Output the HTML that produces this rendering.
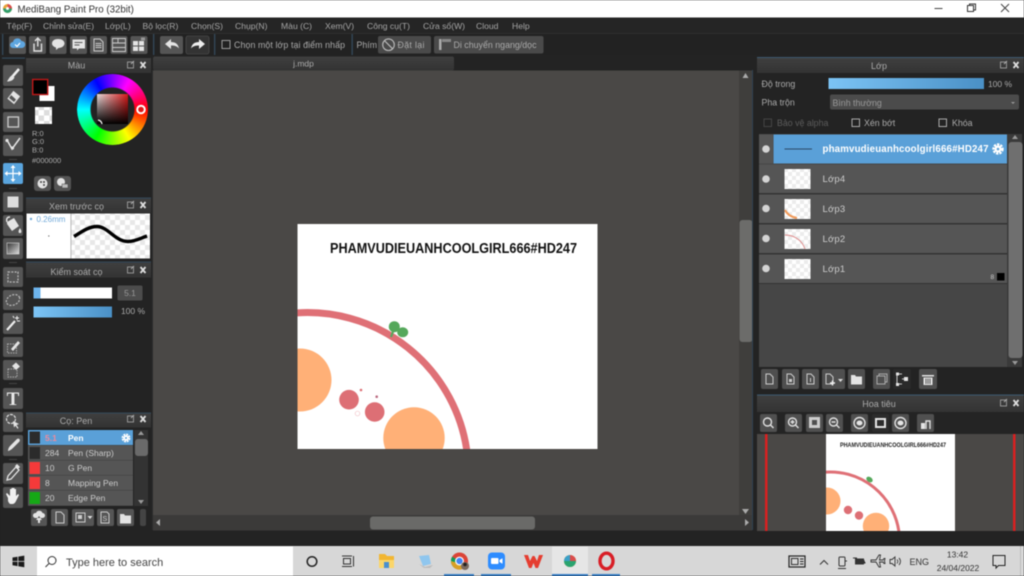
<!DOCTYPE html>
<html><head><meta charset="utf-8"><title>MediBang Paint Pro</title>
<style>
html,body{margin:0;padding:0;background:#222;width:1024px;height:576px;overflow:hidden}
#wrap{position:relative;width:1024px;height:576px;overflow:hidden;filter:blur(.4px)}
svg{position:absolute;left:0;top:0}
text{font-family:"Liberation Sans","Noto Sans CJK SC",sans-serif;font-size:9.5px;fill:#a8a8a8}
.m text{font-size:8.6px;fill:#a5a5a5}
.t{fill:#aaa;font-size:8.8px}
.h{fill:#aaa;font-size:9px;text-anchor:middle}
.b{fill:#555;}
.w{fill:#e4e4e4}
.s{fill:none;stroke:#e0e0e0;stroke-width:1.4}
#wheel{position:absolute;left:77px;top:74px;width:71px;height:71px;border-radius:50%;background:conic-gradient(from 90deg,#f00,#ff0,#0f0,#0ff,#00f,#f0f,#f00);-webkit-mask:radial-gradient(circle,transparent 0 21.5px,#000 22.5px);mask:radial-gradient(circle,transparent 0 21.5px,#000 22.5px)}
#sq{position:absolute;left:97px;top:94px;width:31px;height:30px;background:linear-gradient(to bottom,transparent,#000),linear-gradient(to right,#e6dcdc,#d81818)}
</style></head><body>
<div id="wrap">
<svg width="1024" height="576" viewBox="0 0 1024 576" xmlns="http://www.w3.org/2000/svg">
<defs>
<pattern id="ck" width="8" height="8" patternUnits="userSpaceOnUse"><rect width="8" height="8" fill="#fff"/><rect width="4" height="4" fill="#ececec"/><rect x="4" y="4" width="4" height="4" fill="#ececec"/></pattern>
<pattern id="ck3" width="11" height="11" patternUnits="userSpaceOnUse"><rect width="11" height="11" fill="#fff"/><rect width="5.5" height="5.5" fill="#ddd"/><rect x="5.5" y="5.5" width="5.5" height="5.500" fill="#ddd"/></pattern>
<pattern id="ck2" width="10" height="10" patternUnits="userSpaceOnUse"><rect width="10" height="10" fill="#fff"/><rect width="5" height="5" fill="#e8e8e8"/><rect x="5" y="5" width="5" height="5" fill="#e8e8e8"/></pattern>
<linearGradient id="bl" x1="0" x2="1" y1="0" y2="0"><stop offset="0" stop-color="#7cc4f5"/><stop offset="1" stop-color="#4a90c6"/></linearGradient>
<linearGradient id="gr" x1="0" x2="1" y1="0" y2="1"><stop offset="0" stop-color="#333"/><stop offset="1" stop-color="#ddd"/></linearGradient>
<linearGradient id="hd" x1="0" x2="0" y1="0" y2="1"><stop offset="0" stop-color="#3f3f3f"/><stop offset="1" stop-color="#333"/></linearGradient>
<clipPath id="cv"><rect x="297.5" y="224" width="300" height="225"/></clipPath>
<clipPath id="nv"><rect x="826" y="434" width="129" height="97"/></clipPath>
</defs>

<!-- base -->
<rect width="1024" height="576" fill="#232323"/>
<!-- title bar -->
<rect width="1024" height="17.5" fill="#fff"/>
<circle cx="7.5" cy="8.5" r="4.5" fill="#e8a33a"/><path d="M7.5 4a4.5 4.5 0 0 1 4.5 4.5H7.5z" fill="#d94c4c"/><path d="M3 8.5a4.5 4.5 0 0 0 4.5 4.5 4.5 4.5 0 0 0 4.5-4.5H7.5z" fill="#2f9d6a"/><circle cx="7.5" cy="8.5" r="1.5" fill="#fff"/>
<text x="17.5" y="12.5" style="font-size:9.7px;fill:#333">MediBang Paint Pro (32bit)</text>
<path d="M934.5 8.5h8" stroke="#444" stroke-width="1"/>
<path d="M967.5 5.5h6v6h-6zM969.5 5.5v-1.5h6v6h-2" fill="none" stroke="#333" stroke-width="1"/>
<path d="M1001 4l8 8M1009 4l-8 8" stroke="#444" stroke-width="1"/>

<!-- menu -->
<rect y="17.5" width="1024" height="16" fill="#252525"/>
<rect y="33" width="1024" height="1" fill="#2e2e2e"/>
<g class="m">
<text x="6.5" y="29">Tệp(F)</text><text x="43" y="29">Chỉnh sửa(E)</text><text x="105" y="29">Lớp(L)</text><text x="142.5" y="29">Bộ lọc(R)</text><text x="191" y="29">Chọn(S)</text><text x="235" y="29">Chụp(N)</text><text x="281" y="29">Màu (C)</text><text x="325" y="29">Xem(V)</text><text x="367" y="29">Công cụ(T)</text><text x="423" y="29">Cửa sổ(W)</text><text x="476" y="29">Cloud</text><text x="512" y="29">Help</text>
</g>

<!-- toolbar -->
<rect y="34" width="1024" height="21" fill="#222"/>
<rect x="2" y="34" width="1.3" height="21" fill="#34495a"/><rect x="153" y="34" width="1.3" height="21" fill="#34495a"/><rect x="214" y="34" width="1.3" height="21" fill="#34495a"/><rect x="351.5" y="34" width="1.3" height="21" fill="#34495a"/>
<g class="b">
<rect x="9" y="36" width="17" height="18" rx="2" fill="#555"/><rect x="29" y="36" width="17" height="18" rx="2"/><rect x="49.500" y="36" width="17" height="18" rx="2"/><rect x="70" y="36" width="17" height="18" rx="2"/><rect x="90" y="36" width="17" height="18" rx="2"/><rect x="110.500" y="36" width="17" height="18" rx="2"/><rect x="130.500" y="36" width="17" height="18" rx="2"/>
<rect x="160" y="36" width="23" height="18" rx="2"/><rect x="186" y="36" width="23" height="18" rx="2" fill="#333" stroke="#555" stroke-width=".6"/>
<rect x="378" y="36" width="53" height="17.500" rx="2" fill="#4a4a4a"/><rect x="434" y="36" width="109.500" height="17.500" rx="2" fill="#4a4a4a"/>
</g>
<path d="M13 48a3 3 0 0 1 0-6 4.500 4.500 0 0 1 8.500-1 3.500 3.500 0 0 1 .5 7z" fill="#5ea6e0"/><path d="M15 44.500l2 2 3-3.500" stroke="#fff" stroke-width="1.200" fill="none"/>
<path d="M34 43.500v7.500h7.500v-7.500M37.800 46.500v-8M35 41l2.800-3 2.800 3" class="s"/>
<path d="M58 39c4.500 0 6.500 2 6.500 4.500s-3 4.500-6 4.500l-2.500 2v-2.500c-2.500-.7-4-2.200-4-4 0-2.500 2-4.500 6-4.500z" class="w"/>
<path d="M72.500 39.500h12.500v9h-6l-2 2v-2h-4.500z" class="w"/><path d="M74.500 42.500h8M74.500 45h5" stroke="#555" stroke-width="1"/>
<path d="M94 39h6l3 3v9h-9z" fill="none" stroke="#ccc" stroke-width="1"/><path d="M95.500 43.500h6M95.500 45.500h6M95.500 47.500h6" stroke="#ccc"/>
<path d="M112.500 38.500h13v13h-13zM112.500 43h13M112.500 47.500h13M118 38.500v4.500" fill="none" stroke="#ccc" stroke-width=".9"/>
<rect x="133" y="41" width="5" height="4.500" class="w"/><rect x="139" y="41" width="5" height="4.500" class="w"/><rect x="133" y="46.500" width="5" height="4.500" class="w"/><rect x="139" y="46.500" width="5" height="4.500" class="w"/><rect x="141" y="37.500" width="4" height="3" fill="#999"/>
<path d="M165 44l6-5v3c4 0 7 1.500 8 6.500-2-2.500-4.500-3-8-3v3.500z" class="w"/>
<path d="M205 44l-6-5v3c-4 0-7 1.500-8 6.500 2-2.500 4.500-3 8-3v3.500z" fill="#eee"/>
<rect x="222" y="40.500" width="8" height="8" fill="none" stroke="#aaa" stroke-width=".9"/>
<text x="234" y="48" class="t" textLength="111">Chọn một lớp tại điểm nhấp</text>
<text x="356.500" y="48" class="t">Phím</text>
<circle cx="388.500" cy="44.700" r="5.800" fill="none" stroke="#bbb" stroke-width="1.100"/><path d="M384.500 40.700l8 8" stroke="#bbb" stroke-width="1.100"/>
<text x="397.500" y="48" class="t" textLength="27">Đặt lại</text>
<rect x="439" y="39" width="2.500" height="11" fill="#aaa"/><rect x="442" y="39" width="9" height="3" fill="#888"/>
<text x="453.500" y="48" class="t" textLength="83">Di chuyển ngang/dọc</text>

<!-- canvas area -->
<rect x="153" y="55" width="599" height="16" fill="#232323"/>
<rect x="153" y="56.500" width="301" height="14" rx="2" fill="url(#hd)"/>
<text x="303.500" y="66.500" class="h" style="font-size:8.500px">j.mdp</text>
<rect x="153" y="70.500" width="586" height="445" fill="#4a4846"/>
<rect x="739" y="70.500" width="13" height="445" fill="#3f3e3c"/>
<rect x="739.500" y="220" width="13" height="122" rx="3" fill="#6c6c6a"/>
<path d="M742.500 78l3-5 3 5z" fill="#aaa"/><path d="M742 509h7l-3.500 5z" fill="#aaa"/>
<rect x="153" y="515" width="599" height="15.500" fill="#3b3a39"/>
<rect x="370" y="516.500" width="165" height="13" rx="3" fill="#6a6a68"/>
<path d="M160 519l-4 3.500 4 3.500z" fill="#aaa"/><path d="M745 519l4 3.500-4 3.500z" fill="#aaa"/>
<rect x="752" y="70" width="1" height="460" fill="#2f4252"/><rect x="152" y="70" width="1" height="460" fill="#2c2c2c"/>

<!-- drawing -->
<rect x="297.500" y="224" width="300" height="225" fill="#fff"/>
<g clip-path="url(#cv)">
<circle cx="300" cy="380" r="31.500" fill="#ffb077"/>
<circle cx="414" cy="438" r="30.700" fill="#ffb077"/>
<circle cx="349" cy="399.700" r="9.800" fill="#dd6f75"/>
<circle cx="374.700" cy="412" r="9.800" fill="#dd6f75"/>
<circle cx="361" cy="390" r="1.300" fill="#dd6f75"/><circle cx="376.700" cy="396.700" r="1.300" fill="#bb6a80"/>
<circle cx="357.500" cy="413.500" r="2.300" fill="none" stroke="#f3c4c8" stroke-width=".7"/>
<path d="M290 313.500A161 161 0 0 1 467.400 455" fill="none" stroke="#df7076" stroke-width="7"/>
<path d="M391 337l3-8" stroke="#55a85b" stroke-width="2.200"/>
<circle cx="394.300" cy="326.700" r="5.500" fill="#55a85b"/><ellipse cx="402.700" cy="332.300" rx="5.500" ry="5" fill="#55a85b"/>
</g>
<text x="330" y="253" textLength="247" lengthAdjust="spacingAndGlyphs" style="font-size:14.5px;font-weight:bold;fill:#111">PHAMVUDIEUANHCOOLGIRL666#HD247</text>

<!-- left tools -->
<rect x="0" y="56" width="26" height="475" fill="#232323"/>
<rect x="2" y="57.500" width="23" height="1.200" fill="#34495a"/>
<g fill="#555">
<rect x="3" y="65" width="20" height="21" rx="2"/><rect x="3" y="88" width="20" height="21" rx="2"/><rect x="3" y="112" width="20" height="20" rx="2"/><rect x="3" y="135" width="20" height="21" rx="2"/>
<rect x="3" y="192" width="20" height="20" rx="2"/><rect x="3" y="215" width="20" height="21" rx="2"/><rect x="3" y="238" width="20" height="21" rx="2"/>
<rect x="3" y="267" width="20" height="20" rx="2"/><rect x="3" y="290" width="20" height="20" rx="2"/><rect x="3" y="313" width="20" height="21" rx="2"/><rect x="3" y="337" width="20" height="20" rx="2"/><rect x="3" y="360" width="20" height="20" rx="2"/>
<rect x="3" y="388" width="20" height="21" rx="2"/><rect x="3" y="412" width="20" height="20" rx="2"/><rect x="3" y="435" width="20" height="21" rx="2"/><rect x="3" y="463" width="20" height="21" rx="2"/><rect x="3" y="487" width="20" height="21" rx="2"/>
</g>
<rect x="3" y="163" width="20" height="21" rx="2" fill="#5aa5de"/>
<g fill="#444"><rect x="9" y="159" width="8" height="1"/><rect x="9" y="188" width="8" height="1"/><rect x="9" y="262" width="8" height="1"/><rect x="9" y="383" width="8" height="1"/><rect x="9" y="459" width="8" height="1"/></g>
<path d="M19 69l-7 8" stroke="#eee" stroke-width="2.500"/><path d="M12.500 75.500c-2 0-3 2-5.500 6 3.500 0 6-1 7.500-4z" class="w"/>
<path d="M13.500 91.500l6 5-5.500 7-6-5z" class="w"/><path d="M10.500 94.500l5.500 5-2 2.500-5.500-4.500z" fill="#555"/><path d="M13.500 91.500l6 5-5.500 7-6-5z" fill="none" stroke="#ddd"/>
<rect x="8" y="117" width="10.500" height="10" fill="none" stroke="#ccc" stroke-width="1.300"/>
<path d="M7 140l5 9 8-11" fill="none" stroke="#e6e6e6" stroke-width="1.500"/><circle cx="7" cy="140.500" r="1.600" class="w"/><circle cx="12.500" cy="148" r="1.600" class="w"/>
<path d="M13 165.500v16M5 173.500h16" stroke="#fff" stroke-width="1.200"/><path d="M13 165l-2.500 3h5zM13 182l-2.500-3h5zM4.500 173.500l3-2.500v5zM21.500 173.500l-3-2.500v5z" fill="#fff"/>
<rect x="7.500" y="196.500" width="11" height="11" fill="#ddd"/>
<path d="M7 222l7-4 5 8-7 5-5-7z" class="w"/><path d="M7 222c-1-3 0-5 3-5" class="s"/><path d="M20 228c1 2 2 3 1 5h-2c-1-2 0-3 1-5z" class="w"/>
<rect x="7" y="243" width="12" height="11" fill="url(#gr)" stroke="#ddd" stroke-width=".6"/>
<rect x="8" y="272" width="10" height="10" fill="none" stroke="#bbb" stroke-width="1.200" stroke-dasharray="2 1.300"/>
<ellipse cx="13" cy="300" rx="7" ry="5" transform="rotate(-25 13 300)" fill="none" stroke="#bbb" stroke-width="1.200" stroke-dasharray="2 1.300"/>
<path d="M7 330l8-9" stroke="#eee" stroke-width="2.200"/><path d="M17 316v4M15 318h4M20 321h-3M13 316l1 2" stroke="#eee"/>
<rect x="7.500" y="344" width="9" height="9" fill="none" stroke="#aaa" stroke-dasharray="1.500 1"/><path d="M11 349l7-8 2 2-7 8z" class="w"/>
<rect x="8" y="369" width="9" height="8" fill="none" stroke="#aaa" stroke-dasharray="1.500 1"/><path d="M12 366l4-3.500 4 4-4 3.500z" class="w"/>
<text x="13" y="405" style="font-family:'Liberation Serif',serif;font-size:19px;font-weight:bold;fill:#e8e8e8;text-anchor:middle">T</text>
<circle cx="11" cy="419" r="4.500" fill="none" stroke="#ddd" stroke-width="1.200" stroke-dasharray="3 1"/><path d="M13 421l6 3-2.500 1 2 3-1 .7-2-3-1.500 1.800z" class="w"/>
<path d="M8 451c0-3 2-5 3-6l6-6c2-1 3.500.5 2.500 2.500l-6 6c-1 1-3 3-5.500 3.500z" class="w"/>
<path d="M7 480l1-4 8-9 3 3-8 9z" fill="none" stroke="#e4e4e4" stroke-width="1.300"/><path d="M15 466l2-2 3 3-2 2z" class="w"/>
<path d="M8 498l-2-4 1-1 3 3v-7h1.500v5-6h1.500v6-6h1.500v6-5h1.500v7l2-2 1 1-3 6c-1 2-2 3-4 3h-1c-1.500 0-2-1-3-3z" fill="#f0f0f0"/>

<!-- Colour panel -->
<rect x="26" y="58" width="125" height="137" fill="#232323"/>
<rect x="26" y="58" width="125" height="15" fill="url(#hd)"/>
<text x="76.500" y="68.500" class="h">Màu</text>
<g><rect x="127.500" y="62" width="6" height="6" fill="none" stroke="#aaa" stroke-width=".8"/><path d="M131 64l3-3" stroke="#aaa"/><path d="M140.500 62l5 6M145.500 62l-5 6" stroke="#ddd" stroke-width="1.800"/></g>
<rect x="39.500" y="86" width="15" height="15" fill="#fff"/>
<rect x="32.700" y="79.500" width="15" height="15" fill="#000" stroke="#c01818" stroke-width="1.400"/>
<rect x="35" y="107" width="17" height="17" fill="url(#ck3)"/>
<text x="32" y="136" style="font-size:7.500px;fill:#aaa">R:0</text><text x="32" y="144" style="font-size:7.500px;fill:#aaa">G:0</text><text x="32" y="152.500" style="font-size:7.500px;fill:#aaa">B:0</text><text x="32" y="163" style="font-size:7.500px;fill:#aaa">#000000</text>
<rect x="34" y="176" width="17" height="15" rx="3" fill="#555"/><rect x="54" y="176" width="17" height="15" rx="3" fill="#555"/>
<circle cx="42.500" cy="183.500" r="5" class="w"/><circle cx="41" cy="182" r="1" fill="#444"/><circle cx="44" cy="182" r="1" fill="#444"/><circle cx="44" cy="185" r="1" fill="#444"/>
<circle cx="61" cy="182" r="4" class="w"/><rect x="62" y="184" width="6" height="4" fill="#bbb" stroke="#444" stroke-width=".5"/>

<!-- preview -->
<rect x="26" y="197.500" width="125" height="1.200" fill="#34495a"/>
<rect x="26" y="198.700" width="125" height="14.300" fill="url(#hd)"/>
<text x="76.500" y="209.500" class="h">Xem trước cọ</text>
<g transform="translate(0,140)"><rect x="127.500" y="62" width="6" height="6" fill="none" stroke="#aaa" stroke-width=".8"/><path d="M131 64l3-3" stroke="#aaa"/><path d="M140.500 62l5 6M145.500 62l-5 6" stroke="#ddd" stroke-width="1.800"/></g>
<rect x="26.500" y="213.500" width="44.500" height="45" fill="#fff"/>
<rect x="71" y="213.500" width="79" height="45" fill="url(#ck2)"/>
<rect x="70.500" y="213.500" width=".8" height="45" fill="#aaa"/>
<circle cx="31" cy="219" r="1.200" fill="#6fa8d8"/><text x="36.500" y="222" style="font-size:8px;fill:#6fa8d8">0.26mm</text>
<circle cx="48.800" cy="236" r=".6" fill="#555"/>
<path d="M74 236.500C80 233 88 226.500 97 226.500C108 226.500 115 241.500 128 241.500C135 241.500 141 238 147 236" fill="none" stroke="#000" stroke-width="3.400"/>

<!-- brush control -->
<rect x="26" y="261.500" width="125" height="1.200" fill="#34495a"/>
<rect x="26" y="262.700" width="125" height="15" fill="url(#hd)"/>
<text x="76.500" y="275" class="h">Kiểm soát cọ</text>
<g transform="translate(0,205)"><rect x="127.500" y="62" width="6" height="6" fill="none" stroke="#aaa" stroke-width=".8"/><path d="M131 64l3-3" stroke="#aaa"/><path d="M140.500 62l5 6M145.500 62l-5 6" stroke="#ddd" stroke-width="1.800"/></g>
<rect x="33.500" y="287.500" width="78.500" height="11" fill="#fff"/><rect x="33.500" y="287.500" width="7" height="11" fill="#6db4ec"/>
<rect x="117.500" y="285.500" width="25" height="15" rx="1.500" fill="#4c4c4c"/><text x="130" y="296" style="font-size:8.500px;fill:#999;text-anchor:middle">5.1</text>
<rect x="33.500" y="306.500" width="78.500" height="11" fill="url(#bl)"/>
<text x="133" y="314" style="font-size:8.500px;fill:#aaa;text-anchor:middle">100 %</text>

<!-- brush list -->
<rect x="26" y="412.500" width="125" height="1.200" fill="#34495a"/>
<rect x="26" y="413.500" width="125" height="14" fill="url(#hd)"/>
<text x="76" y="424" class="h">Cọ: Pen</text>
<g transform="translate(0,354)"><rect x="127.500" y="62" width="6" height="6" fill="none" stroke="#aaa" stroke-width=".8"/><path d="M131 64l3-3" stroke="#aaa"/><path d="M140.500 62l5 6M145.500 62l-5 6" stroke="#ddd" stroke-width="1.800"/></g>
<rect x="28" y="430" width="105" height="76" fill="#3c3c3c"/>
<rect x="28" y="430" width="105" height="15" fill="#5aa0d8"/>
<rect x="28" y="445.500" width="105" height="14.500" fill="#555"/><rect x="28" y="460.500" width="105" height="14.500" fill="#555"/><rect x="28" y="475.500" width="105" height="14.500" fill="#555"/><rect x="28" y="490.500" width="105" height="15" fill="#555"/>
<rect x="29.500" y="431.500" width="10.500" height="12" fill="#2b2b2b"/><rect x="29.500" y="447" width="10.500" height="12" fill="#2b2b2b"/><rect x="29.500" y="462" width="10.500" height="12" fill="#f43a3a"/><rect x="29.500" y="477" width="10.500" height="12" fill="#f43a3a"/><rect x="29.500" y="492" width="10.500" height="12" fill="#16a816"/>
<g>
<text x="45" y="441" style="font-size:8.500px;fill:#f08a9a;font-weight:bold">5.1</text><text x="68" y="441" style="font-size:8.500px;fill:#fff;font-weight:bold">Pen</text>
<text x="45" y="456" style="font-size:8.500px;fill:#ccc">284</text><text x="68" y="456" style="font-size:8.500px;fill:#ccc">Pen (Sharp)</text>
<text x="45" y="471" style="font-size:8.500px;fill:#ccc">10</text><text x="68" y="471" style="font-size:8.500px;fill:#ccc">G Pen</text>
<text x="45" y="486" style="font-size:8.500px;fill:#ccc">8</text><text x="68" y="486" style="font-size:8.500px;fill:#ccc">Mapping Pen</text>
<text x="45" y="501" style="font-size:8.500px;fill:#ccc">20</text><text x="68" y="501" style="font-size:8.500px;fill:#ccc">Edge Pen</text>
</g>
<circle cx="126" cy="438" r="3.300" fill="none" stroke="#fff" stroke-width="2.300" stroke-dasharray="1.800 .8"/><circle cx="126" cy="438" r="2.600" fill="#fff"/><circle cx="126" cy="438" r="1" fill="#5aa0d8"/>
<rect x="134" y="430" width="14" height="76" fill="#333"/><rect x="135" y="439" width="13" height="17" rx="3" fill="#6a6a6a"/>
<path d="M138 435l3-4 3 4z" fill="#999"/><path d="M138 500h6l-3 4z" fill="#999"/>
<g fill="#555"><rect x="31" y="509" width="16" height="17" rx="2"/><rect x="51" y="509" width="17" height="17" rx="2"/><rect x="72" y="509" width="22" height="17" rx="2"/><rect x="97" y="509" width="17" height="17" rx="2"/><rect x="117" y="509" width="17" height="17" rx="2"/><rect x="140" y="509" width="6" height="17" rx="2" fill="#444"/></g>
<path d="M35 518a2.500 2.500 0 0 1 1-5 3.500 3.500 0 0 1 6.500 0 2.500 2.500 0 0 1 0 5zM39 516l-3 4h2v3h2v-3h2z" class="w"/>
<path d="M56 512h5l3 3v8h-8z" fill="none" stroke="#ccc"/>
<rect x="76" y="513" width="9" height="9" fill="none" stroke="#ccc"/><rect x="78" y="515" width="4" height="4" fill="#ccc"/><path d="M87.500 516h5l-2.500 3z" fill="#ddd"/>
<path d="M101 512h6l2 2v9h-8z" fill="none" stroke="#ccc"/><text x="102.500" y="521" style="font-size:7px;fill:#ccc">S</text>
<path d="M120 514h4l1 1.500h6v8h-11z" class="w"/>

<!-- right panel -->
<rect x="753" y="55" width="271" height="476" fill="#232323"/>
<rect x="757" y="57" width="267" height="1" fill="#3d5a70"/>
<rect x="757" y="58" width="267" height="15" fill="url(#hd)"/>
<text x="879" y="69" class="h">Lớp</text>
<g transform="translate(873,0)"><rect x="127.500" y="62" width="6" height="6" fill="none" stroke="#aaa" stroke-width=".8"/><path d="M131 64l3-3" stroke="#aaa"/><path d="M140.500 62l5 6M145.500 62l-5 6" stroke="#ddd" stroke-width="1.800"/></g>
<text x="761.500" y="87" class="t">Độ trong</text>
<rect x="828.500" y="78" width="155.500" height="11" fill="url(#bl)"/>
<text x="1000" y="87" style="font-size:8.500px;fill:#aaa;text-anchor:middle">100 %</text>
<text x="761.500" y="105.500" class="t">Pha trộn</text>
<rect x="830" y="94.500" width="189" height="15" rx="2" fill="#4b4b4b"/>
<text x="832.500" y="106" style="font-size:8.800px;fill:#999">Bình thường</text>
<path d="M1011 102h4l-2 2z" fill="#999"/>
<rect x="764" y="119" width="7.500" height="7.500" fill="none" stroke="#444"/>
<text x="777" y="126" class="t" style="fill:#5c5c5c">Bảo vệ alpha</text>
<rect x="852" y="119" width="7.500" height="7.500" fill="none" stroke="#aaa"/>
<text x="864" y="126" class="t">Xén bớt</text>
<rect x="939" y="119" width="7.500" height="7.500" fill="none" stroke="#aaa"/>
<text x="952" y="126" class="t">Khóa</text>

<!-- layers -->
<rect x="759" y="134" width="248" height="233" fill="#464646"/>
<rect x="759" y="134.500" width="14" height="29" fill="#555"/>
<rect x="773.500" y="134.500" width="233.500" height="29" fill="#5aa0d8"/>
<g fill="#555"><rect x="759" y="164.500" width="248" height="28.500"/><rect x="759" y="194.500" width="248" height="28.500"/><rect x="759" y="224.500" width="248" height="28.500"/><rect x="759" y="254.500" width="248" height="28.500"/></g>
<g fill="#333"><rect x="759" y="193" width="248" height="1.500"/><rect x="759" y="223" width="248" height="1.500"/><rect x="759" y="253" width="248" height="1.500"/><rect x="759" y="283" width="248" height="1"/></g>
<g fill="#d4d4d4"><circle cx="766" cy="149" r="3.800"/><circle cx="766" cy="179" r="3.800"/><circle cx="766" cy="208.500" r="3.800"/><circle cx="766" cy="238.500" r="3.800"/><circle cx="766" cy="268.500" r="3.800"/></g>
<rect x="784.500" y="148.500" width="27.500" height="1" fill="#2c4a66"/>
<rect x="784.500" y="169" width="26" height="20" fill="url(#ck)"/>
<rect x="784.500" y="199" width="26" height="20" fill="url(#ck)"/><path d="M785 210c2 4 6 7 12 8" fill="none" stroke="#f09a5a" stroke-width="2"/>
<rect x="784.500" y="229" width="26" height="20" fill="url(#ck)"/><path d="M785 235c9 0 17 5 20 14" fill="none" stroke="#d88" stroke-width=".9"/>
<rect x="784.500" y="259" width="26" height="20" fill="url(#ck)"/>
<text x="822.500" y="152" textLength="166" style="font-size:9.700px;font-weight:bold;fill:#fff">phamvudieuanhcoolgirl666#HD247</text>
<circle cx="998" cy="149" r="4.300" fill="none" stroke="#fff" stroke-width="2.800" stroke-dasharray="2.200 1"/><circle cx="998" cy="149" r="3.500" fill="#fff"/><circle cx="998" cy="149" r="1.300" fill="#5aa0d8"/>
<g><text x="822.500" y="182" style="font-size:9.500px;fill:#ccc;letter-spacing:.2px">Lớp4</text><text x="822.500" y="212" style="font-size:9.500px;fill:#ccc;letter-spacing:.2px">Lớp3</text><text x="822.500" y="242" style="font-size:9.500px;fill:#ccc;letter-spacing:.2px">Lớp2</text><text x="822.500" y="272" style="font-size:9.500px;fill:#ccc;letter-spacing:.2px">Lớp1</text></g>
<text x="990.500" y="279" style="font-size:6.500px;fill:#ccc">8</text><rect x="997" y="273" width="7.500" height="7.500" fill="#000"/>
<rect x="1007" y="134" width="15" height="233" fill="#3a3a3a"/>
<rect x="1008.500" y="142" width="14" height="216" rx="3" fill="#6f6f6f"/>
<path d="M1012 139l3-4 3 4z" fill="#999"/><path d="M1012 361h6l-3 4z" fill="#999"/>
<g fill="#4f4f4f"><rect x="761" y="369" width="17" height="20" rx="2"/><rect x="782" y="369" width="17" height="20" rx="2"/><rect x="802" y="369" width="17" height="20" rx="2"/><rect x="822" y="369" width="23" height="20" rx="2"/><rect x="848" y="369" width="17" height="20" rx="2"/><rect x="873" y="369" width="17" height="20" rx="2"/><rect x="893" y="369" width="18" height="20" rx="2" fill="#2a2a2a"/><rect x="919" y="369" width="18" height="20" rx="2"/></g>
<path d="M766 374h4l3 3v7h-7z" fill="none" stroke="#ccc"/>
<path d="M787 374h4l3 3v7h-7z" fill="none" stroke="#ccc"/><rect x="789" y="379" width="3" height="3" fill="#ccc"/>
<path d="M807 374h4l3 3v7h-7z" fill="none" stroke="#ccc"/><path d="M810.500 378v4" stroke="#ccc"/>
<path d="M826 374h4l3 3v7h-7z" fill="none" stroke="#ccc"/><path d="M830 383h5M832.500 380.500v5" stroke="#eee" stroke-width="1.400"/><path d="M838 379h5l-2.500 3z" fill="#ddd"/>
<path d="M851 375h4l1 1.500h6v8h-11z" class="w"/>
<rect x="877" y="376" width="8" height="8" fill="none" stroke="#aaa"/><path d="M879 376v-2h8v8h-2" fill="none" stroke="#aaa"/>
<path d="M897 374h5M897 384h5M897 374v10M902 379h3" stroke="#ccc" fill="none"/><rect x="904" y="377" width="4" height="4" class="w"/><rect x="896" y="372.500" width="3" height="3" class="w"/><rect x="896" y="383" width="3" height="3" class="w"/>
<path d="M922 375h12v1.500h-12zM923.500 377.500h9v7.500h-9z" class="w"/><path d="M926 378.500v5.500M928 378.500v5.500M930 378.500v5.500" stroke="#555"/>

<!-- navigator -->
<rect x="757" y="394.500" width="267" height="1" fill="#3d5a70"/>
<rect x="757" y="395.500" width="267" height="17" fill="url(#hd)"/>
<text x="879" y="407" class="h">Hoa tiêu</text>
<g transform="translate(873,338)"><rect x="127.500" y="62" width="6" height="6" fill="none" stroke="#aaa" stroke-width=".8"/><path d="M131 64l3-3" stroke="#aaa"/><path d="M140.500 62l5 6M145.500 62l-5 6" stroke="#ddd" stroke-width="1.800"/></g>
<rect x="757" y="412" width="267" height="22" fill="#242424"/>
<g fill="#505050"><rect x="760" y="414" width="17" height="18" rx="2"/><rect x="785" y="414" width="17" height="18" rx="2"/><rect x="806" y="414" width="17" height="18" rx="2"/><rect x="826" y="414" width="17" height="18" rx="2"/><rect x="851" y="414" width="17" height="18" rx="2"/><rect x="872" y="414" width="17" height="18" rx="2" fill="#2c2c2c"/><rect x="892" y="414" width="17" height="18" rx="2"/><rect x="917" y="414" width="17" height="18" rx="2"/></g>
<circle cx="767.500" cy="422" r="4" class="s"/><path d="M770.500 425l3 3" class="s"/>
<circle cx="792.500" cy="422" r="4" class="s"/><path d="M795.500 425l3 3M790.500 422h4M792.500 420v4" class="s"/>
<path d="M809 417h11v11h-11z" fill="#ccc"/><path d="M812 420h5v5h-5z" fill="#505050"/>
<circle cx="833.500" cy="422" r="4" class="s"/><path d="M836.500 425l3 3M831.500 422h4" class="s"/>
<circle cx="859.500" cy="423" r="5.500" class="s"/><ellipse cx="859.500" cy="423" rx="3" ry="2.500" class="w"/>
<path d="M875 418h11v10h-11z" class="w"/><path d="M877 420h7v6h-7z" fill="#2c2c2c"/>
<circle cx="900.500" cy="423" r="5.500" class="s"/><ellipse cx="900.500" cy="423" rx="3" ry="2.500" class="w"/>
<rect x="921" y="423" width="4" height="6" class="w"/><path d="M926 429v-8h4v8" class="s"/>
<rect x="757" y="434" width="267" height="97" fill="#4a4846"/>
<rect x="765" y="434" width="2.500" height="97" fill="#d92020"/><rect x="1013" y="434" width="2.500" height="97" fill="#d92020"/>
<rect x="826" y="434" width="129" height="97" fill="#fff"/>
<g clip-path="url(#nv)">
<circle cx="827" cy="501" r="13.500" fill="#ffb077"/><circle cx="876" cy="526" r="13.200" fill="#ffb077"/>
<circle cx="848" cy="510" r="4.200" fill="#dd6f75"/><circle cx="859" cy="515.500" r="4.200" fill="#dd6f75"/>
<path d="M822 472.500A69.200 69.200 0 0 1 899.300 535" fill="none" stroke="#df7076" stroke-width="3"/>
<ellipse cx="869.500" cy="479.500" rx="3.500" ry="2.500" transform="rotate(35 869.500 479.500)" fill="#55a85b"/>
</g>
<text x="840" y="447" textLength="106" lengthAdjust="spacingAndGlyphs" style="font-size:6.500px;font-weight:bold;fill:#222">PHAMVUDIEUANHCOOLGIRL666#HD247</text>

<!-- bottom dark strip -->
<rect y="531" width="1024" height="15" fill="#232323"/>

<!-- taskbar -->
<rect y="546" width="1024" height="30" fill="#d7d7d7"/>
<rect x="37" y="546.500" width="256" height="29.500" fill="#fff"/>
<path d="M12.500 557.500l5-.8v4.300h-5zM18.300 556.600l6-1v5.400h-6zM12.500 561.800h5v4.300l-5-.8zM18.300 561.800h6v5.400l-6-1z" fill="#1a1a1a"/>
<circle cx="52" cy="560.500" r="4" fill="none" stroke="#333" stroke-width="1"/><path d="M49 563.500l-3.500 3.500" stroke="#333" stroke-width="1"/>
<text x="66" y="566" style="font-size:11px;fill:#444">Type here to search</text>
<circle cx="312" cy="561.500" r="4.800" fill="none" stroke="#222" stroke-width="1.500"/>
<path d="M342 556h10M342 566.500h10M343.500 558.500h7v5.500h-7zM353.500 556v10.500" fill="none" stroke="#333" stroke-width="1"/>
<path d="M379 554h6l2 2h7v4h-15z" fill="#f2b632"/><path d="M379 560h15v8h-15z" fill="#fbd66a"/><rect x="384" y="562" width="5" height="6" fill="#4a90d0"/>
<path d="M419 556l10-1 2 9-8 2z" fill="#8fc6ee"/><path d="M419 564l6 3 8-2-3 3h-6z" fill="#bbb"/>
<circle cx="459.500" cy="561" r="8.500" fill="#db4437"/><path d="M459.500 561l-7.400-4.200a8.500 8.500 0 0 0 4 12z" fill="#0f9d58"/><path d="M451 561a8.500 8.500 0 0 0 10 8.500l5-4z" fill="#d9a026"/><circle cx="459.500" cy="561" r="3.800" fill="#4285f4" stroke="#fff" stroke-width="1.200"/>
<circle cx="465" cy="566" r="4" fill="#7a6a60"/><circle cx="465" cy="564.500" r="1.800" fill="#222"/>
<rect x="488" y="552.500" width="17" height="17" rx="4" fill="#2d8cff"/><rect x="491" y="558" width="7.500" height="6" rx="1" fill="#fff"/><path d="M499.500 560l3-1.800v5.600l-3-1.800z" fill="#fff"/>
<path d="M524 555l4 0 2 6 2.500-5h2l2.500 5 2-6h4l-5 13h-2.500l-2-5-2 5h-2.500z" fill="#e53d30"/>
<rect x="552" y="546.500" width="36" height="29.500" fill="#e6e6e6"/>
<circle cx="570" cy="561" r="6" fill="#e8a33a"/><path d="M570 555a6 6 0 0 1 6 6h-6z" fill="#d94c4c"/><path d="M564 561a6 6 0 0 0 12 0h-6z" fill="#2aa36f"/><path d="M564 561a6 6 0 0 1 6-6v6z" fill="#3aa0c8"/>
<ellipse cx="606.500" cy="561" rx="6.500" ry="7.800" fill="none" stroke="#d81e26" stroke-width="3.400"/>
<rect x="444" y="574" width="30" height="2" fill="#3a7fc4"/><rect x="481" y="574" width="30" height="2" fill="#3a7fc4"/><rect x="552" y="574" width="36" height="2" fill="#3a7fc4"/><rect x="592" y="574" width="28" height="2" fill="#3a7fc4"/>
<!-- tray -->
<rect x="789" y="556" width="16" height="11" fill="none" stroke="#222" stroke-width="1.200"/><rect x="791.500" y="558.500" width="6.500" height="6" fill="none" stroke="#222" stroke-width=".9"/><path d="M800 559h3.500M800 561.500h3.500M800 564h3.500" stroke="#222" stroke-width=".9"/>
<path d="M820 564.500l4-4 4 4" fill="none" stroke="#333" stroke-width="1"/>
<rect x="839" y="557" width="6" height="9" rx="1" fill="none" stroke="#333"/><path d="M838 568.500h8M845 561h2" stroke="#333"/>
<rect x="855" y="558.500" width="9" height="6" fill="#333"/><path d="M853 558h4M864 560v3h1.500" stroke="#333"/>
<path d="M872 561h5l3-5h1.500l-1 5h3.500l1-1.500h1l-.5 2.500.5 2.500h-1l-1-1.500h-3.500l1 5h-1.500l-3-5h-5z" fill="none" stroke="#333" stroke-width=".9" transform="translate(-1,-1)"/>
<path d="M890 559.500h2l3-2.500v9l-3-2.500h-2zM897 559.500a3 3 0 0 1 0 4M899 558a5 5 0 0 1 0 7" fill="none" stroke="#333" stroke-width=".9"/>
<text x="909.500" y="565" style="font-size:9px;fill:#333">ENG</text>
<text x="957.500" y="557.500" style="font-size:8.500px;fill:#333;text-anchor:middle">13:42</text>
<text x="958" y="571" style="font-size:8.500px;fill:#333;text-anchor:middle">24/04/2022</text>
<path d="M993 555.500h12v10h-6.500l-2.500 2.500v-2.500h-3z" fill="none" stroke="#222" stroke-width="1"/>
<rect x="1020" y="546" width="1" height="30" fill="#bbb"/>
</svg>
<div id="wheel"></div>
<div id="sq"></div>
<svg width="1024" height="576" viewBox="0 0 1024 576" style="pointer-events:none">
<circle cx="141" cy="109.500" r="3.800" fill="#e01818" stroke="#fff" stroke-width="2"/>
<path d="M98 120a5 5 0 0 1 4 4" fill="none" stroke="#fff" stroke-width="1.300"/>
</svg>
</div>
</body></html>
